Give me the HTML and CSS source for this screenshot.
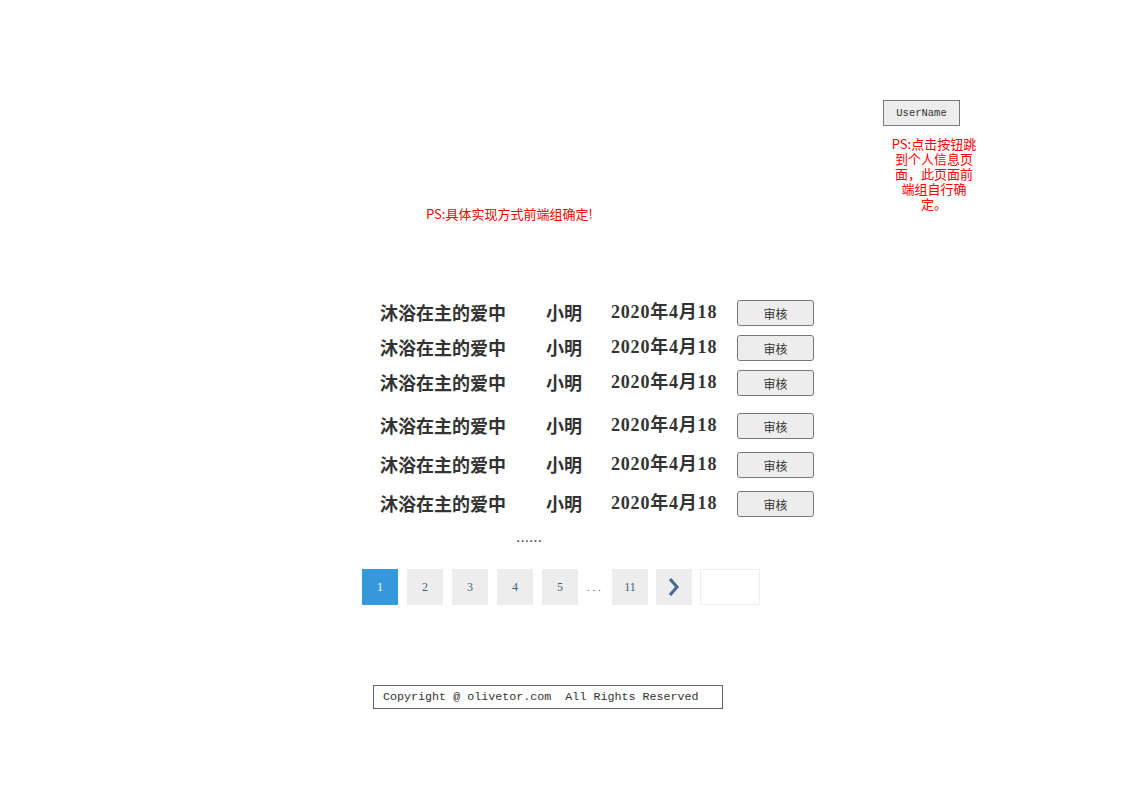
FILE: index.html
```html
<!DOCTYPE html>
<html lang="zh-CN">
<head>
<meta charset="utf-8">
<title>审核列表</title>
<link rel="stylesheet" href="styles.css">
</head>
<body>
<div class="page">
  <header class="header">
    <p class="note center-note">PS:具体实现方式前端组确定!</p>
    <div class="user">
      <button class="user-btn">UserName</button>
      <p class="note user-note">PS:点击按钮跳到个人信息页面，此页面前端组自行确定。</p>
    </div>
  </header>

  <section class="list">
    <div class="row">
      <span class="title">沐浴在主的爱中</span>
      <span class="name">小明</span>
      <span class="date">2020年4月18</span>
      <button class="audit">审核</button>
    </div>
    <div class="row">
      <span class="title">沐浴在主的爱中</span>
      <span class="name">小明</span>
      <span class="date">2020年4月18</span>
      <button class="audit">审核</button>
    </div>
    <div class="row">
      <span class="title">沐浴在主的爱中</span>
      <span class="name">小明</span>
      <span class="date">2020年4月18</span>
      <button class="audit">审核</button>
    </div>
    <div class="row row-gap-lg">
      <span class="title">沐浴在主的爱中</span>
      <span class="name">小明</span>
      <span class="date">2020年4月18</span>
      <button class="audit">审核</button>
    </div>
    <div class="row row-gap-md">
      <span class="title">沐浴在主的爱中</span>
      <span class="name">小明</span>
      <span class="date">2020年4月18</span>
      <button class="audit">审核</button>
    </div>
    <div class="row row-gap-md">
      <span class="title">沐浴在主的爱中</span>
      <span class="name">小明</span>
      <span class="date">2020年4月18</span>
      <button class="audit">审核</button>
    </div>
    <div class="more">……</div>
  </section>

  <nav class="pager">
    <span class="pg active">1</span>
    <span class="pg">2</span>
    <span class="pg">3</span>
    <span class="pg">4</span>
    <span class="pg">5</span>
    <span class="pg-dots">. . .</span>
    <span class="pg">11</span>
    <span class="pg pg-next">
      <svg width="14" height="20" viewBox="0 0 14 20"><path d="M3 2 L10 10 L3 18" fill="none" stroke="#4a6a8f" stroke-width="3.2"/></svg>
    </span>
    <span class="pg-input"></span>
  </nav>

  <footer class="footer">Copyright @ olivetor.com&nbsp; All Rights Reserved</footer>
</div>
</body>
</html>
```

FILE: styles.css
```css
* { box-sizing: border-box; }
html, body { margin: 0; padding: 0; background: #fff; }
body { font-family: "Noto Sans CJK SC", sans-serif; color: #333; }
.page { width: 1123px; }

.header {
  display: flex;
  align-items: flex-start;
  height: 300px;
  padding-top: 100px;
}
.note {
  margin: 0;
  color: #ff0000;
  font-family: "Noto Sans CJK SC", sans-serif;
  font-size: 13px;
  line-height: 15px;
}
.center-note {
  margin-left: 426px;
  margin-top: 106px;
  white-space: nowrap;
}
.user {
  margin-left: auto;
  margin-right: 145px;
  width: 95px;
}
.user-btn {
  display: block;
  width: 77px;
  height: 26px;
  padding: 0;
  background: #ededed;
  border: 1px solid #7a7a7a;
  border-radius: 0;
  font-family: "Liberation Mono", monospace;
  font-size: 10.5px;
  color: #333;
}
.user-note {
  width: 88px;
  margin-top: 10px;
  margin-left: 7px;
  text-align: center;
}

.list { margin-left: 380px; }
.row {
  display: grid;
  grid-template-columns: 166px 65px 126px 77px;
  align-items: center;
  height: 26px;
  margin-top: 9px;
  font-family: "Noto Sans CJK SC", sans-serif;
  font-size: 18px;
  font-weight: bold;
  color: #333;
}
.row:first-child { margin-top: 0; }
.row.row-gap-lg { margin-top: 17px; }
.row.row-gap-md { margin-top: 13px; }
.row span { line-height: 26px; position: relative; top: -1px; }
.date {
  font-family: "Liberation Serif", "Noto Sans CJK SC", serif;
  font-weight: bold;
  letter-spacing: 0.8px;
  white-space: nowrap;
}
.audit {
  width: 77px;
  height: 26px;
  padding: 0;
  background: #ededed;
  border: 1px solid #777;
  border-radius: 3px;
  font-family: "Noto Sans CJK SC", sans-serif;
  font-size: 12px;
  color: #333;
}
.more {
  margin-top: 16px;
  margin-left: 136px;
  font-size: 13px;
  line-height: 15px;
  color: #333;
}

.pager {
  display: flex;
  align-items: center;
  gap: 9px;
  margin-top: 21px;
  margin-left: 362px;
  height: 36px;
}
.pg {
  display: flex;
  align-items: center;
  justify-content: center;
  width: 36px;
  height: 36px;
  background: #ededed;
  color: #3d5f86;
  font-family: "Liberation Serif", serif;
  font-size: 12px;
}
.pg.active { background: #3498db; color: #fff; }
.pg-dots {
  width: 16px;
  color: #3d5f86;
  font-family: "Liberation Serif", serif;
  font-size: 11px;
  white-space: nowrap;
}
.pg-next { margin-left: -1px; }
.pg-input {
  width: 60px;
  height: 36px;
  margin-left: -1px;
  border: 1px solid #eee;
  background: #fff;
}

.footer {
  width: 350px;
  height: 24px;
  margin-top: 80px;
  margin-left: 373px;
  padding-left: 9px;
  border: 1px solid #666;
  font-family: "Liberation Mono", monospace;
  font-size: 11.7px;
  line-height: 22px;
  color: #333;
  white-space: nowrap;
}
```
